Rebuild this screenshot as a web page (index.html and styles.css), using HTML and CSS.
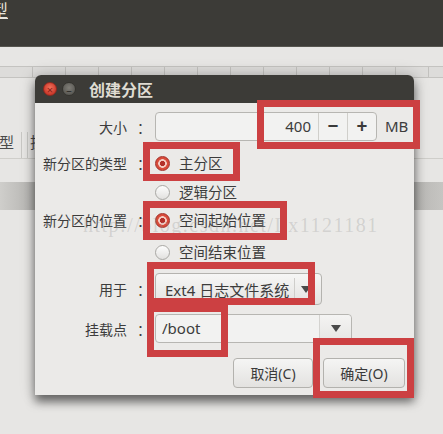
FILE: index.html
```html
<!DOCTYPE html>
<html lang="zh-CN">
<head>
<meta charset="utf-8">
<title>创建分区</title>
<link rel="stylesheet" href="styles.css">
</head>
<body>
<div class="screen">
  <div class="topbar"><span class="frag">型</span></div>
  <div class="app">
    <div class="tbl-head"></div>
    <div class="tbl-row"><span class="cell c1">类型</span><span class="cell c2">挂载点</span></div>
    <div class="sel-row"></div>
  </div>

  <div class="dialog">
    <div class="titlebar">
      <span class="wbtn close">×</span>
      <span class="wbtn mini">–</span>
      <span class="title">创建分区</span>
    </div>
    <div class="body">
      <div class="row r-size">
        <span class="lbl">大小<span class="colon">：</span></span>
        <div class="spin">
          <span class="val">400</span>
          <span class="sbtn">−</span>
          <span class="sbtn">+</span>
        </div>
        <span class="unit">MB</span>
      </div>
      <div class="row r-type">
        <span class="lbl">新分区的类型<span class="colon">：</span></span>
        <span class="radio on"></span><span class="opt">主分区</span>
      </div>
      <div class="row r-type2">
        <span class="lbl"></span>
        <span class="radio"></span><span class="opt">逻辑分区</span>
      </div>
      <div class="row r-pos">
        <span class="lbl">新分区的位置<span class="colon">：</span></span>
        <span class="radio on"></span><span class="opt">空间起始位置</span>
      </div>
      <div class="row r-pos2">
        <span class="lbl"></span>
        <span class="radio"></span><span class="opt">空间结束位置</span>
      </div>
      <div class="row r-use">
        <span class="lbl">用于<span class="colon">：</span></span>
        <div class="combo">
          <span class="ctext">Ext4 日志文件系统</span>
          <span class="carrow"><span class="tri"></span></span>
        </div>
      </div>
      <div class="row r-mount">
        <span class="lbl">挂载点<span class="colon">：</span></span>
        <div class="mentry">
          <span class="mtext">/boot</span>
          <span class="marrow"><span class="tri"></span></span>
        </div>
      </div>
      <div class="row r-btns">
        <span class="button b-cancel">取消(C)</span>
        <span class="button b-ok">确定(O)</span>
      </div>
    </div>
  </div>

  <div class="watermark">http://blog.csdn.net/Lx1121181</div>

  <div class="mark m1"></div>
  <div class="mark m2"></div>
  <div class="mark m3"></div>
  <div class="mark m4"></div>
  <div class="mark m5"></div>
  <div class="mark m6"></div>
</div>
</body>
</html>
```

FILE: styles.css
```css
* { box-sizing: border-box; margin: 0; padding: 0; }

body {
  margin: 0;
  width: 443px;
  height: 434px;
  overflow: hidden;
  background: #e6e5e3;
  font-family: "Noto Sans", "Noto Sans CJK SC", sans-serif;
  color: #3c3c3c;
}

.screen {
  position: relative;
  width: 443px;
  height: 434px;
  overflow: hidden;
  background: #e7e6e4;
}

/* background application */
.topbar {
  height: 47px;
  background: #3c3b37;
  border-bottom: 1px solid #56554f;
  overflow: hidden;
}
.topbar .frag {
  display: block;
  margin-left: -9px;
  color: #e6e3dc;
  font-family: "Noto Sans CJK SC", sans-serif;
  font-size: 17px;
  line-height: 19px;
  text-decoration: underline;
}

.app { display: flex; flex-direction: column; }

.tbl-head {
  margin-top: 19px;
  height: 12px;
  border-top: 1px solid #c4c3c0;
  border-bottom: 1px solid #c4c3c0;
  background: repeating-linear-gradient(90deg, #dddcda 0 32px, #c2c1be 32px 33px);
}

.tbl-row {
  margin-top: 54px;
  height: 27px;
  border-bottom: 1px solid #cfceca;
  display: flex;
  align-items: center;
  font-family: "Noto Sans CJK SC", sans-serif;
  font-size: 15px;
  color: #4a4a4a;
  overflow: hidden;
}
.tbl-row .c1 { margin-left: -16px; width: 38px; border-right: 1px solid #c8c7c4; height: 27px; line-height: 20px; }
.tbl-row .c2 { margin-left: 5px; border-left: 1px solid #c8c7c4; padding-left: 2px; height: 27px; line-height: 20px; }

.sel-row {
  margin-top: 23px;
  height: 28px;
  background: linear-gradient(90deg, #cfcecb 0, #b7b6b3 30px, #b7b6b3 calc(100% - 30px), #c6c5c2 100%);
}

/* dialog window */
.dialog {
  position: absolute;
  left: 35px;
  top: 75px;
  width: 379px;
  height: 320px;
  border-radius: 6px 6px 0 0;
  background: #ebeae8;
  box-shadow: 0 7px 10px rgba(0,0,0,0.5), 0 0 16px rgba(0,0,0,0.22);
  display: flex;
  flex-direction: column;
}

.titlebar {
  height: 28px;
  background: #3c3b37;
  border-radius: 6px 6px 0 0;
  display: flex;
  align-items: center;
  padding-left: 8px;
  flex: none;
}
.wbtn {
  width: 14px;
  height: 14px;
  border-radius: 50%;
  display: flex;
  align-items: center;
  justify-content: center;
  font-size: 11px;
  line-height: 1;
  flex: none;
}
.wbtn.close {
  background: radial-gradient(circle at 50% 40%, #f2725c, #cc3a2c 70%);
  border: 1px solid #902a20;
  color: #8a2218;
}
.wbtn.mini {
  margin-left: 5px;
  background: radial-gradient(circle at 50% 40%, #807e78, #5c5b56 70%);
  border: 1px solid #35342f;
  color: #2e2d2a;
}
.title {
  margin-left: 13px;
  color: #dfdbd2;
  font-family: "Noto Sans CJK SC", sans-serif;
  font-weight: bold;
  font-size: 16px;
  line-height: 20px;
}

.body {
  flex: 1;
  padding: 9px 9px 7px 8px;
  display: flex;
  flex-direction: column;
}

.row {
  display: flex;
  align-items: center;
  font-size: 15px;
  flex: none;
}
.lbl {
  width: 108px;
  margin-right: 4px;
  text-align: right;
  flex: none;
  font-family: "Noto Sans CJK SC", sans-serif;
  font-size: 14px;
  white-space: nowrap;
  color: #3c3c3c;
}
.colon { margin-left: 10px; }

.r-size { height: 29px; }
.r-type { height: 22px; margin-top: 11px; }
.r-type2 { height: 22px; margin-top: 7px; }
.r-pos { height: 22px; margin-top: 6px; }
.r-pos2 { height: 22px; margin-top: 10px; }
.r-use { height: 32px; margin-top: 10px; }
.r-mount { height: 29px; margin-top: 9px; }
.r-btns { height: 30px; margin-top: 15px; justify-content: flex-end; gap: 10px; }

/* spin button */
.spin {
  width: 222px;
  height: 29px;
  display: flex;
  border: 1px solid #b7b6b2;
  border-radius: 4px;
  background: #f2f2f1;
  flex: none;
}
.spin .val {
  flex: 1;
  text-align: right;
  padding-right: 7px;
  line-height: 27px;
}
.spin .sbtn {
  width: 29px;
  border-left: 1px solid #d0cfcb;
  text-align: center;
  line-height: 26px;
  font-size: 19px;
  font-weight: bold;
  color: #3a3a3a;
  flex: none;
}
.unit { margin-left: 8px; line-height: 27px; }

/* radio */
.radio {
  width: 15px;
  height: 15px;
  border-radius: 50%;
  border: 1px solid #a9a8a4;
  background: linear-gradient(#fdfdfd, #e2e1df);
  margin-right: 9px;
  flex: none;
}
.radio.on {
  border-color: #a3302a;
  background: radial-gradient(circle, #b3302a 0 2.3px, #f5cdc4 2.9px 4px, #d84b3a 4.6px);
}
.opt { font-family: "Noto Sans CJK SC", sans-serif; line-height: 22px; font-size: 14.5px; }

/* combo */
.combo {
  width: 167px;
  height: 32px;
  display: flex;
  align-items: center;
  border: 1px solid #b4b3af;
  border-radius: 4px;
  background: linear-gradient(#f6f6f5, #e4e3e1);
  flex: none;
}
.ctext { flex: 1; padding-left: 9px; white-space: nowrap; }
.carrow {
  width: 27px;
  height: 22px;
  border-left: 1px solid #cfcecb;
  display: flex;
  align-items: center;
  justify-content: center;
  padding-right: 4px;
}
.tri {
  width: 0;
  height: 0;
  border-left: 5px solid transparent;
  border-right: 5px solid transparent;
  border-top: 7px solid #4a4a4a;
}

.mentry {
  width: 197px;
  height: 29px;
  display: flex;
  align-items: stretch;
  border: 1px solid #b7b6b2;
  border-radius: 4px;
  background: #f2f2f1;
  flex: none;
}
.mtext { flex: 1; padding-left: 6px; line-height: 27px; }
.marrow {
  width: 32px;
  border-left: 1px solid #d4d3d0;
  background: linear-gradient(#f4f4f3, #e6e5e3);
  border-radius: 0 4px 4px 0;
  display: flex;
  align-items: center;
  justify-content: center;
}

/* buttons */
.button {
  height: 30px;
  display: flex;
  align-items: center;
  justify-content: center;
  border: 1px solid #b3b2ae;
  border-radius: 4px;
  background: linear-gradient(#f5f5f4, #e3e2e0);
  font-family: "Noto Sans", "Noto Sans CJK SC", sans-serif;
  font-size: 14px;
  color: #3a3a3a;
}
.b-cancel { width: 80px; }
.b-ok { width: 82px; }

/* watermark */
.watermark {
  position: absolute;
  left: 83px;
  top: 214px;
  font-family: "Liberation Serif", serif;
  font-size: 20px;
  letter-spacing: 1.5px;
  color: rgba(150, 150, 150, 0.3);
  white-space: nowrap;
  pointer-events: none;
}

/* red annotation frames */
.mark {
  position: absolute;
  border: 7px solid #cc4042;
}
.m1 { left: 257px; top: 100px; width: 163px; height: 49px; }
.m2 { left: 143px; top: 142px; width: 97px; height: 39px; }
.m3 { left: 143px; top: 201px; width: 144px; height: 39px; }
.m4 { left: 147px; top: 262px; width: 168px; height: 43px; }
.m5 { left: 147px; top: 305px; width: 81px; height: 52px; }
.m6 { left: 313px; top: 338px; width: 101px; height: 60px; }
```
